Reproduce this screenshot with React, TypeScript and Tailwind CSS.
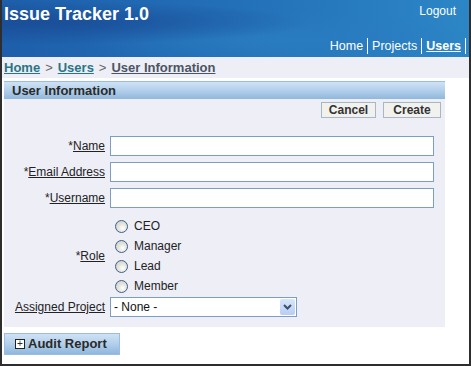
import React, { useState } from 'react';

const roles = ['CEO', 'Manager', 'Lead', 'Member'];

const Radio: React.FC<{ checked: boolean; onClick: () => void }> = ({ checked, onClick }) => (
    <button
        type="button"
        onClick={onClick}
        className="w-[13px] h-[13px] rounded-full border border-[#3c5f8a] bg-[radial-gradient(circle_at_60%_65%,#ffffff_0%,#e4e4dc_45%,#c8c8c0_100%)] flex items-center justify-center"
    >
        {checked && <span className="w-[5px] h-[5px] rounded-full bg-[#2a9a2a]" />}
    </button>
);

const TextRow: React.FC<{ label: string; value: string; onChange: (v: string) => void }> = ({ label, value, onChange }) => (
    <div className="flex items-center h-[26px]">
        <div className="w-[101px] text-right text-[12px] text-[#222]">
            *<span className="underline">{label}</span>
        </div>
        <input
            value={value}
            onChange={(e) => onChange(e.target.value)}
            className="ml-[5px] w-[324px] h-[20px] border border-[#7b9ec2] bg-white px-1 text-[12px] outline-none"
        />
    </div>
);

const App: React.FC = () => {
    const [name, setName] = useState('');
    const [email, setEmail] = useState('');
    const [username, setUsername] = useState('');
    const [role, setRole] = useState('');

    return (
        <div className="w-[471px] h-[366px] bg-white border-l-2 border-r-2 border-b-2 border-[#2e2e2e] font-['Liberation_Sans',Arial,sans-serif] overflow-hidden">
            <div className="h-[57px] bg-[radial-gradient(ellipse_at_8%_40%,#1a4e98_0%,transparent_45%),radial-gradient(ellipse_at_60%_70%,#2a7cc0_0%,transparent_50%),linear-gradient(90deg,#1e5eaa_0%,#2370b8_50%,#2c86c6_100%)] flex flex-col">
                <div className="flex justify-between items-start">
                    <h1 className="pl-[2px] pt-[3px] text-[18px] leading-[22px] font-bold text-white">Issue Tracker 1.0</h1>
                    <a className="pt-[3px] pr-[13px] text-[12px] leading-[16px] text-white">Logout</a>
                </div>
                <nav className="mt-auto mb-[3px] flex justify-end items-center text-[12.5px] leading-[15px] text-white pr-[3px]">
                    <a className="px-[4px]">Home</a>
                    <span className="w-px h-[16px] bg-white" />
                    <a className="px-[4px]">Projects</a>
                    <span className="w-px h-[16px] bg-white" />
                    <a className="px-[4px] font-bold underline">Users</a>
                    <span className="w-px h-[16px] bg-white" />
                </nav>
            </div>

            <div className="h-[21px] bg-[#eeeef7] pl-[2px] flex items-center text-[13px] font-bold text-[#555]">
                <a className="underline text-[#2a7585]">Home</a>
                <span className="mx-[5px] font-normal text-[#666]">&gt;</span>
                <a className="underline text-[#2a7585]">Users</a>
                <span className="mx-[5px] font-normal text-[#666]">&gt;</span>
                <span className="underline text-[#4b5563]">User Information</span>
            </div>

            <div className="ml-[2px] mt-[3px] w-[441px] h-[246px] bg-[#eeeef7]">
                <div className="h-[18px] border-t border-[#9cbde2] bg-[linear-gradient(180deg,#cfe2f4_0%,#b2cfea_50%,#8fb7dd_100%)] pl-[8px] flex items-center text-[13px] font-bold text-[#2a2a2a]">
                    User Information
                </div>
                <div className="flex justify-end gap-[7px] pr-[4px] pt-[3px]">
                    <button className="w-[55px] h-[16px] border border-[#a9b6c4] bg-[#f1f1ee] text-[12px] leading-[14px] font-bold text-[#333]">Cancel</button>
                    <button className="w-[58px] h-[16px] border border-[#a9b6c4] bg-[#f1f1ee] text-[12px] leading-[14px] font-bold text-[#333]">Create</button>
                </div>

                <div className="mt-[15px]">
                    <TextRow label="Name" value={name} onChange={setName} />
                    <TextRow label="Email Address" value={email} onChange={setEmail} />
                    <TextRow label="Username" value={username} onChange={setUsername} />
                </div>

                <div className="flex items-center mt-[5px]">
                    <div className="w-[101px] text-right text-[12px] text-[#222]">
                        *<span className="underline">Role</span>
                    </div>
                    <div className="ml-[10px] flex flex-col">
                        {roles.map((r) => (
                            <label key={r} className="h-[20px] flex items-center gap-[6px] text-[12px] text-[#222]">
                                <Radio checked={role === r} onClick={() => setRole(r)} />
                                {r}
                            </label>
                        ))}
                    </div>
                </div>

                <div className="flex items-center mt-[1px]">
                    <div className="w-[101px] text-right text-[12px] text-[#222]">
                        <span className="underline">Assigned Project</span>
                    </div>
                    <div className="ml-[5px] w-[187px] h-[20px] border border-[#7b9ec2] bg-white flex items-center justify-between">
                        <span className="pl-[3px] text-[12px] text-[#111]">- None -</span>
                        <span className="mr-px w-[15px] h-[16px] rounded-[2px] bg-[linear-gradient(180deg,#d8e6fb,#b7cdf3)] flex items-center justify-center">
                            <svg width="9" height="6" viewBox="0 0 9 6"><path d="M1 1 L4.5 4.5 L8 1" stroke="#3d4f6a" strokeWidth="2" fill="none" /></svg>
                        </span>
                    </div>
                </div>
            </div>

            <div className="ml-[2px] mt-[6px] w-[116px] h-[22px] border border-[#9cbde2] bg-[linear-gradient(180deg,#cfe2f4_0%,#b2cfea_50%,#8fb7dd_100%)] flex items-center pl-[10px] gap-[3px] text-[13px] font-bold text-[#2a2a2a]">
                <span className="w-[10px] h-[10px] border border-[#222] bg-white flex items-center justify-center text-[10px] leading-none font-normal">+</span>
                Audit Report
            </div>
        </div>
    );
};

export default App;
